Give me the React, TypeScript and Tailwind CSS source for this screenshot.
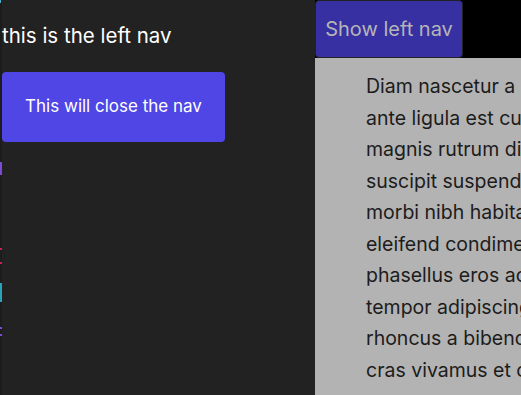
import React from 'react';

const lines = [
  'Diam nascetur a viverra lacinia tincidunt',
  'ante ligula est cursus sagittis aliquam',
  'magnis rutrum dis quam ornare conubia',
  'suscipit suspendisse pretium vestibulum',
  'morbi nibh habitasse consequat justo',
  'eleifend condimentum porta dictum felis',
  'phasellus eros ac faucibus malesuada',
  'tempor adipiscing lobortis hendrerit mi',
  'rhoncus a bibendum pulvinar nostra',
  'cras vivamus et curae egestas nunc',
];

function EdgeMarks() {
  // bits of something clipped off the left edge
  return (
    <div className="flex w-[2px] shrink-0 flex-col bg-[#1c1c1c]">
      <div className="h-[3px] w-[1px] bg-[#3fb3c9]" />
      <div className="mt-[159px] h-[13px] w-[2px] bg-[#7b4bd6]" />
      <div className="mt-[73px] h-[2px] w-[2px] bg-[#d0205a]" />
      <div className="mt-[12px] h-[2px] w-[2px] bg-[#d0205a]" />
      <div className="mt-[19px] h-[19px] w-[2px] bg-[#2aa3b8]" />
      <div className="mt-[25px] h-[2px] w-[2px] bg-[#7b4bd6]" />
      <div className="mt-[5px] h-[2px] w-[2px] bg-[#7b4bd6]" />
    </div>
  );
}

export default function App() {
  return (
    <div
      className="flex h-[395px] w-[521px] overflow-hidden bg-black"
      style={{ fontFamily: 'Inter, "Noto Sans", sans-serif' }}
    >
      <EdgeMarks />
      <nav className="w-[313px] shrink-0 bg-[#222222]">
        <p className="pt-[24px] text-[20.5px] leading-[24px] text-white">this is the left nav</p>
        <button
          type="button"
          className="mt-[24px] h-[70px] w-[223px] rounded-[4px] bg-[#4f46e5] text-[17px] text-white"
        >
          This will close the nav
        </button>
      </nav>

      <main className="flex min-w-0 flex-1 flex-col">
        <div className="flex">
          <button
            type="button"
            className="h-[58px] w-[148px] shrink-0 rounded-[4px] border border-[#222222] bg-[#3730a3] text-[20px] text-[#b5b5b5]"
          >
            Show left nav
          </button>
        </div>
        <div className="flex-1 bg-[#b3b3b3] pl-[51px] pt-[13px] text-[19.5px] leading-[31.5px] text-[#1c1c1c]">
          {lines.map((l) => (
            <div key={l} className="whitespace-nowrap">
              {l}
            </div>
          ))}
        </div>
      </main>
    </div>
  );
}
